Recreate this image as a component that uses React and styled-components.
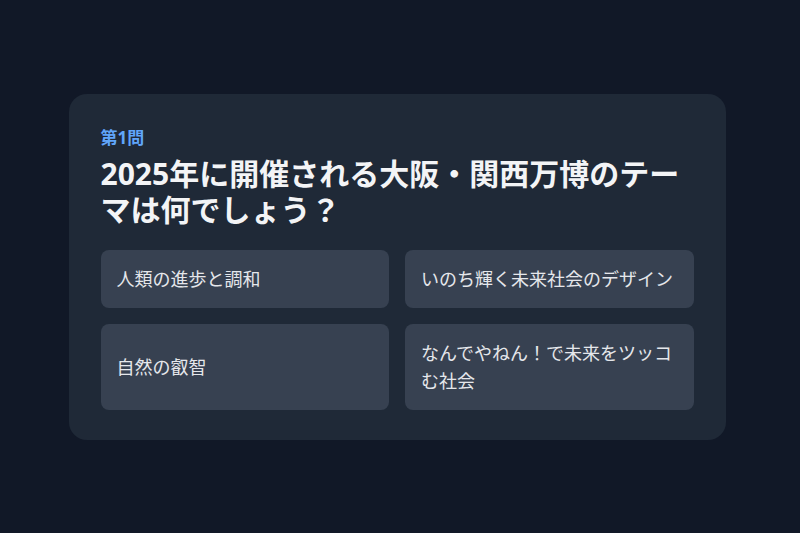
import React from 'react';
import styled, { createGlobalStyle } from 'styled-components';

const GlobalStyle = createGlobalStyle`
  html, body {
    margin: 0;
    padding: 0;
    background: #111827;
  }
  body {
    font-family: "Noto Sans", "Noto Sans CJK JP", sans-serif;
    -webkit-font-smoothing: antialiased;
  }
  * {
    box-sizing: border-box;
  }
`;

const quiz = {
  number: 1,
  // split where the reference wraps the line
  question: ['2025年に開催される大阪・関西万博のテー', 'マは何でしょう？'],
  options: [
    '人類の進歩と調和',
    'いのち輝く未来社会のデザイン',
    '自然の叡智',
    'なんでやねん！で未来をツッコむ社会',
  ],
};

export default function App() {
  return (
    <>
      <GlobalStyle />
      <Page>
        <Card>
          <Label>第{quiz.number}問</Label>
          <Question>
            {quiz.question[0]}
            <wbr />
            {quiz.question[1]}
          </Question>
          <Options>
            {quiz.options.map((item, index) => (
              <Option key={index} type="button">
                {item}
              </Option>
            ))}
          </Options>
        </Card>
      </Page>
    </>
  );
}

const Page = styled.div`
  min-height: 533px;
  display: flex;
  align-items: center;
  justify-content: center;
  padding-right: 6px;
`;

const Card = styled.div`
  width: 657px;
  background: #1f2937;
  border-radius: 18px;
  padding: 32px 32px 30px;
`;

const Label = styled.div`
  font-size: 17px;
  line-height: 24px;
  font-weight: 700;
  color: #60a5fa;
  margin-bottom: 6px;
`;

const Question = styled.h2`
  margin: 0 0 22px;
  font-size: 30px;
  line-height: 36px;
  font-weight: 700;
  color: #f3f4f6;
`;

const Options = styled.div`
  display: grid;
  grid-template-columns: 1fr 1fr;
  gap: 16px;
`;

const Option = styled.button`
  display: flex;
  align-items: center;
  text-align: left;
  border: none;
  border-radius: 8px;
  background: #374151;
  color: #e5e7eb;
  font-family: inherit;
  font-size: 18px;
  line-height: 28px;
  padding: 15px 16px;
  cursor: pointer;
`;
